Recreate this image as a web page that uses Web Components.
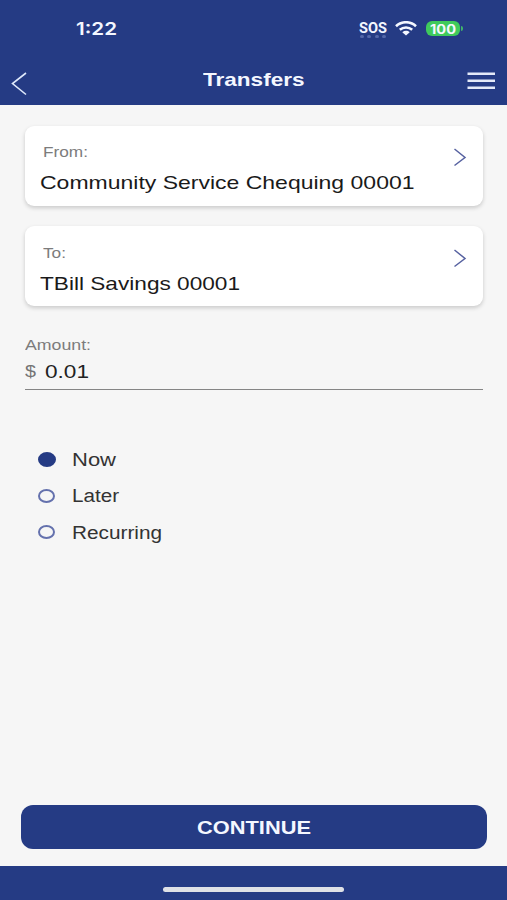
<!DOCTYPE html>
<html lang="en">
<head>
<meta charset="utf-8">
<title>Transfers</title>
<style>
  html, body { margin: 0; height: 100%; }
  body { background: #f6f6f6; font-family: "Liberation Sans", Arial, sans-serif; overflow: hidden; }
</style>
</head>
<body>
<transfer-screen></transfer-screen>
<script>
function define(name, html, setup) {
  const template = document.createElement('template');
  template.innerHTML = html;
  customElements.define(name, class extends HTMLElement {
    connectedCallback() {
      if (this.shadowRoot) return;
      this.attachShadow({ mode: 'open' }).append(template.content.cloneNode(true));
      if (setup) setup(this, this.shadowRoot);
    }
  });
}

// Extended-width lettering: the text is widened to the width in its "w" attribute.
define('wide-text', `
  <style>
    :host { display: block; height: 24px; line-height: 24px; white-space: nowrap; flex: none; }
    span { display: inline-block; transform-origin: 0 50%; }
  </style><span><slot></slot></span>`,
  (host, root) => {
    const w = +host.getAttribute('w');
    const span = root.querySelector('span');
    host.style.width = w + 'px';
    span.style.transform = 'scaleX(' + w / span.getBoundingClientRect().width + ')';
  });

define('status-bar', `
  <style>
    :host { display: flex; height: 56px; box-sizing: border-box; padding: 18px 44px 0 76px; color: #f4f7ff;
            justify-content: space-between; align-items: flex-start; font-family: Inter, sans-serif; }
    .time { font-size: 17.5px; font-weight: 600; margin-top: -1px; }
    .right { display: flex; align-items: flex-start; }
    .sos { display: grid; width: 28px; margin-top: -2px; font: 700 15.5px "Roboto", sans-serif; }
    .dots { display: flex; justify-content: space-between; padding: 0 1px; margin-top: -5px; }
    .dots i { width: 4px; height: 3px; border-radius: 2px; background: #5367a8; }
    .wifi { margin: 3px 0 0 8px; }
    .battery { display: flex; align-items: center; margin: 3px 0 0 9px; }
    .cell { width: 34px; height: 15px; border-radius: 6px; background: #3fca5c; display: flex;
            align-items: center; justify-content: center; font-size: 13px; font-weight: 700; }
    .tip { width: 2px; height: 5px; margin-left: 1px; border-radius: 0 2px 2px 0; background: #3fb36a; }
  </style>
  <wide-text class="time" w="41">1:22</wide-text>
  <div class="right">
    <div class="sos"><wide-text w="28">SOS</wide-text><div class="dots"><i></i><i></i><i></i><i></i></div></div>
    <svg class="wifi" width="22" height="15" viewBox="0 0 22 15" fill="none" stroke="#f4f7ff" stroke-width="2.6">
      <path d="M1 5.2C6.7-.1 15.3-.1 21 5.2"/><path d="M4.8 8.8c3.6-3.1 8.800-3.1 12.400 0"/>
      <path d="M7.300 11.200c2.200-1.900 5.200-1.900 7.400 0L11 14.400z" fill="#f4f7ff" stroke="none"/>
    </svg>
    <div class="battery"><div class="cell"><wide-text w="26">100</wide-text></div><div class="tip"></div></div>
  </div>`);

define('nav-bar', `
  <style>
    :host { display: grid; grid-template-columns: 40px 1fr 40px; height: 49px; color: #f4f7ff; }
    .back { margin: 16px 0 0 11px; }
    .title { justify-self: center; margin-top: 12px; font-size: 19px; font-weight: 700; }
    .menu { margin-top: 16px; }
  </style>
  <svg class="back" width="17" height="24" viewBox="0 0 17 24" fill="none" stroke="#dfe9fb" stroke-width="1.6"><path d="M15 1L1.500 11.500 15 22.500"/></svg>
  <wide-text class="title" w="101.5"><slot></slot></wide-text>
  <svg class="menu" width="28" height="18" viewBox="0 0 28 18" fill="#e4e9f8"><path d="M.5.500h27.500v2.500H.5zM.5 7.500h27.500v2.500H.5zM.5 14.500h27.500v2.500H.5z"/></svg>`);

define('account-card', `
  <style>
    :host { display: flex; justify-content: space-between; box-sizing: border-box; height: 80px;
            padding: 14.500px 16px 0 15px; background: #fff; border-radius: 9px;
            box-shadow: 0 2px 4px rgba(0,0,0,.18); }
    .label { display: block; margin-left: 2.500px; height: 30.900px; font-size: 14.500px; color: #7c7c7c; }
    .name { font-size: 19px; color: #1a1a1a; }
    svg { margin-top: 8px; }
  </style>
  <div><div class="label"><slot name="label"></slot></div><div class="name"><slot></slot></div></div>
  <svg width="14" height="20" viewBox="0 0 14 20" fill="none" stroke="#5661a0" stroke-width="1.500"><path d="M1.500 1L12 9.500 1.500 17.500"/></svg>`);

define('amount-field', `
  <style>
    :host { display: block; box-sizing: border-box; height: 57px; border-bottom: 1px solid #858585; }
    .label { font-size: 14.500px; color: #7c7c7c; }
    .row { display: flex; gap: 9px; margin-top: 3px; }
    .sign { font-size: 16.500px; color: #747474; margin-top: -1px; }
    .value { font-size: 19px; color: #222; }
  </style>
  <wide-text class="label" w="66">Amount:</wide-text>
  <div class="row"><wide-text class="sign" w="11">$</wide-text><wide-text class="value" w="44">0.01</wide-text></div>`);

define('radio-option', `
  <style>
    :host { display: flex; align-items: center; height: 36.500px; gap: 16px; font-size: 18px; color: #333; }
    i { width: 17px; height: 14px; box-sizing: border-box; border: 2px solid #6471ad; border-radius: 50%; margin-top: -1px; }
    :host([checked]) i { width: 18px; height: 15px; margin-right: -1px; background: #253b84; border-color: #253b84; }
  </style><i></i><slot></slot>`);

define('primary-button', `
  <style>
    :host { display: flex; align-items: center; justify-content: center; height: 44px; border-radius: 12px;
            background: #253b84; color: #f4f7ff; font-size: 18.500px; font-weight: 700;
            padding-top: 1px; box-sizing: border-box; }
  </style><slot></slot>`);

define('home-bar', `
  <style>
    :host { display: flex; justify-content: center; height: 34px; background: #253b84; }
    i { width: 181px; height: 5px; margin-top: 21px; border-radius: 3px; background: #dfe1e6; }
  </style><i></i>`);

define('transfer-screen', `
  <style>
    :host { display: flex; flex-direction: column; width: 507px; height: 900px; background: #f6f6f6; }
    header { background: #253b84; height: 105px; }
    main { flex: 1; padding: 20.500px 24px 0 25px; }
    account-card + account-card { margin-top: 20.700px; }
    amount-field { margin-top: 26.800px; }
    .when { margin: 51.600px 0 0 13px; }
    .when wide-text { padding-left: 1px; }
    primary-button { margin: 0 20px 17px 21px; }
  </style>
  <header><status-bar></status-bar><nav-bar>Transfers</nav-bar></header>
  <main>
    <account-card><wide-text slot="label" w="45">From:</wide-text><wide-text w="374.5">Community Service Chequing 00001</wide-text></account-card>
    <account-card><wide-text slot="label" w="23">To:</wide-text><wide-text w="200">TBill Savings 00001</wide-text></account-card>
    <amount-field></amount-field>
    <div class="when">
      <radio-option checked><wide-text w="44">Now</wide-text></radio-option>
      <radio-option><wide-text w="47">Later</wide-text></radio-option>
      <radio-option><wide-text w="90">Recurring</wide-text></radio-option>
    </div>
  </main>
  <primary-button><wide-text w="114">CONTINUE</wide-text></primary-button>
  <home-bar></home-bar>`);
</script>
</body>
</html>
